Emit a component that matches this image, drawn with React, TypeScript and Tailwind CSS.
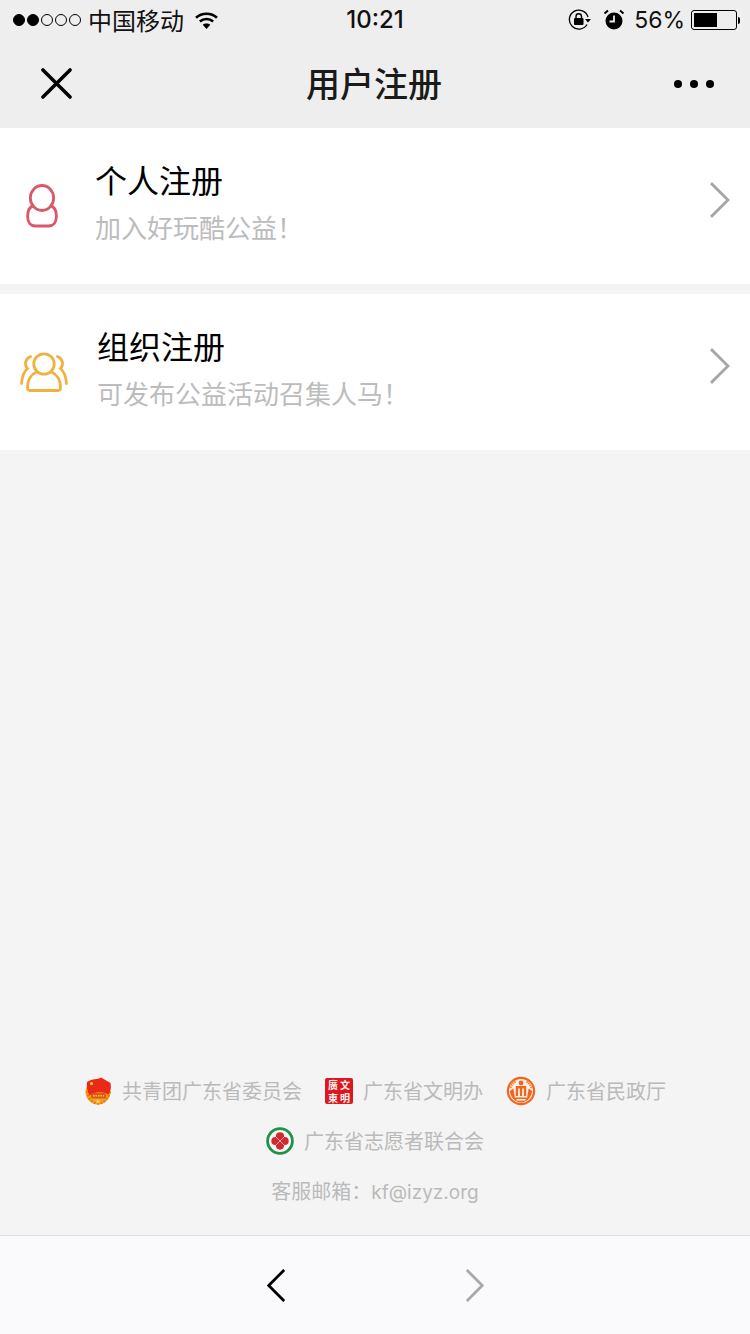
import type { ReactNode } from "react";

const cjk = "font-['Noto_Sans_CJK_SC','Liberation_Sans',sans-serif]";

function SignalDots() {
  return (
    <div className="flex items-center gap-[1.5px]">
      {[0, 1, 2, 3, 4].map((i) => (
        <span
          key={i}
          className={`h-[12.4px] w-[12.4px] rounded-full border border-black ${i < 2 ? "bg-black" : ""}`}
        />
      ))}
    </div>
  );
}

function WifiIcon() {
  return (
    <svg width="25" height="19" viewBox="0 0 26 20" fill="none" stroke="#000" strokeWidth="2.8">
      <path d="M2 7 C8 1.5 18 1.5 24 7" />
      <path d="M6 11 C10 7.5 16 7.5 20 11" />
      <path d="M13 19 L9 14.5 C11 12.8 15 12.8 17 14.5 Z" fill="#000" stroke="none" />
    </svg>
  );
}

function RotationLockIcon() {
  return (
    <svg width="24" height="22" viewBox="0 0 24 22" fill="none">
      <path d="M20 8 A9.5 9.5 0 1 0 19 15.5" stroke="#000" strokeWidth="1.3" />
      <path d="M17 10 H23 L20 13.5 Z" fill="#000" />
      <rect x="6" y="9" width="9.5" height="7" rx="1" fill="#000" />
      <path d="M8 9 V7.5 A2.7 2.7 0 0 1 13.5 7.5 V9" stroke="#000" strokeWidth="1.4" />
    </svg>
  );
}

function AlarmIcon() {
  return (
    <svg width="22" height="22" viewBox="0 0 22 22" fill="none">
      <circle cx="11" cy="12" r="8.5" fill="#000" />
      <path d="M11 6.5 V12.5 H6.5" stroke="#eeeeee" strokeWidth="1.8" />
      <path d="M1.5 4.5 L5 1.5 M20.5 4.5 L17 1.5" stroke="#000" strokeWidth="2" />
    </svg>
  );
}

function Battery() {
  return (
    <div className="flex items-center">
      <div className="h-[20px] w-[46px] rounded-[3px] border border-black p-[2px]">
        <div className="h-full w-[23px] bg-black" />
      </div>
      <div className="ml-[1px] h-[7px] w-[2px] rounded-r-sm bg-black" />
    </div>
  );
}

function Chevron({ dir, color, width = 2.8, w, h }: { dir: "left" | "right"; color: string; width?: number; w: number; h: number }) {
  return (
    <svg width={w} height={h} viewBox="0 0 21 34" preserveAspectRatio="none" fill="none" stroke={color} strokeWidth={width}>
      <path d={dir === "right" ? "M2 1 L19 17 L2 33" : "M19 1 L2 17 L19 33"} />
    </svg>
  );
}

function PersonIcon() {
  return (
    <svg width="32" height="44" viewBox="0 0 34 44" preserveAspectRatio="none" fill="none" stroke="#d9596a" strokeWidth="3">
      <circle cx="17" cy="14" r="12.4" />
      <path d="M8 21.5 C4 23 1.8 26 1.8 31 V33 C1.8 38.5 5 42 10 42 H24 C29 42 32.2 38.5 32.2 33 V31 C32.2 26 30 23 26 21.5" />
    </svg>
  );
}

function GroupIcon() {
  return (
    <svg width="48" height="40" viewBox="0 0 48 40" fill="none" stroke="#f2b040" strokeWidth="2.8" strokeLinecap="round">
      <circle cx="24" cy="12" r="10.2" />
      <path d="M16.5 20 C10 23 7.5 29 7.5 35.5 C7.5 38 8 38.5 10 38.5 H38 C40 38.5 40.5 38 40.5 35.5 C40.5 29 38 23 31.5 20" />
      <path d="M10.5 4.5 C5 7 4 13 7.5 16.5 C4 19.5 2 25 1.5 31.5" />
      <path d="M37.5 4.5 C43 7 44 13 40.5 16.5 C44 19.5 46 25 46.5 31.5" />
    </svg>
  );
}

function YouthLeagueBadge() {
  return (
    <svg width="28" height="28" viewBox="0 0 28 28">
      <circle cx="14" cy="15" r="12.5" fill="#f3a51f" />
      <path d="M3.5 14 C3 20 8 26.5 14 26.5 C20 26.5 25 20 26 14" fill="none" stroke="#e77c17" strokeWidth="2.4" strokeDasharray="2 1.4" />
      <path d="M3 5 C9 1 13 3 17 0.5 L26.5 6 C27.5 11 26.5 14 24.5 17.5 C18 14 10 15 5.5 18.5 C3 14 2.5 9 3 5 Z" fill="#ea2a17" />
      <circle cx="7.5" cy="6.5" r="1.5" fill="#f8d23c" />
      <rect x="7" y="16" width="15" height="5.5" rx="1.5" fill="#e2561a" />
      <path d="M9 18.7 H20" stroke="#f8c740" strokeWidth="1.4" strokeDasharray="1.5 1" />
      <circle cx="14" cy="24.5" r="1.8" fill="#fad04e" />
    </svg>
  );
}

// red square seal holding the four characters
function CivilisationSeal() {
  return (
    <div className="grid h-[26px] w-[28px] grid-cols-2 place-items-center rounded-[2px] bg-[#dc1720] px-[2px] font-['Noto_Sans_CJK_SC',serif] text-[10px] font-bold leading-[11px] text-[#fff2ee]">
      <span>廣</span>
      <span>文</span>
      <span>東</span>
      <span>明</span>
    </div>
  );
}

function CivilAffairsBadge() {
  return (
    <svg width="30" height="30" viewBox="0 0 30 30">
      <circle cx="15" cy="15" r="14.2" fill="#f0651f" />
      <circle cx="15" cy="15" r="12" fill="#fff0e2" />
      <path d="M4.5 12 A10.8 10.8 0 0 1 10 5.2 M25.5 12 A10.8 10.8 0 0 0 20 5.2" fill="none" stroke="#f0873f" strokeWidth="2.2" strokeDasharray="1.5 0.8" />
      <path d="M3.8 15 C4.5 21 9 26.5 15 26.5 C21 26.5 25.5 21 26.2 15 L22.6 12.5 L21.2 21.5 H8.8 L7.4 12.5 Z" fill="#f0651f" />
      <circle cx="15" cy="7" r="2.4" fill="#f0651f" />
      <path d="M9.8 10 H20.2 V20 H17.9 V12.6 H16.1 V20 H13.9 V12.6 H12.1 V20 H9.8 Z" fill="#f0651f" />
      <rect x="10.5" y="23" width="9" height="1.6" fill="#fff0e2" />
    </svg>
  );
}

function VolunteerBadge() {
  return (
    <svg width="28" height="28" viewBox="0 0 28 28">
      <circle cx="14" cy="14" r="12.4" fill="#f7f8f4" stroke="#1f9149" strokeWidth="2.8" />
      <circle cx="14" cy="9.4" r="4.1" fill="#d2282f" />
      <circle cx="14" cy="18.6" r="4.1" fill="#d2282f" />
      <circle cx="9.4" cy="14" r="4.1" fill="#d2282f" />
      <circle cx="18.6" cy="14" r="4.1" fill="#d2282f" />
      <path d="M9.5 9.5 L18.5 18.5 M18.5 9.5 L9.5 18.5" stroke="#f3b7b3" strokeWidth="0.9" />
    </svg>
  );
}

function RegisterRow({ icon, title, hint, iconBox }: { icon: ReactNode; title: string; hint: string; iconBox: string }) {
  return (
    <div className="flex h-[156px] items-center bg-white pr-[20px]">
      <div className={`flex shrink-0 justify-center ${iconBox}`}>{icon}</div>
      <div className="mt-[-10px] flex-1">
        <div className="text-[32px] leading-[46px] text-black">{title}</div>
        <div className="mt-[6px] text-[26px] leading-[38px] text-[#bcbcbc]">{hint}</div>
      </div>
      <div className="mt-[-12px]">
        <Chevron dir="right" color="#a6a6a6" w={21} h={36} />
      </div>
    </div>
  );
}

function Partner({ badge, name }: { badge: ReactNode; name: string }) {
  return (
    <div className="flex items-center gap-[10px]">
      {badge}
      <span className="text-[20px] leading-[28px] text-[#bababa]">{name}</span>
    </div>
  );
}

export default function App() {
  return (
    <div className={`flex h-[1334px] w-[750px] flex-col overflow-hidden bg-[#f4f4f4] ${cjk}`}>
      {/* status bar + title bar */}
      <header className="h-[128px] shrink-0 bg-[#eeeeee]">
        <div className="relative flex h-[40px] items-center justify-between pl-[13px] pr-[10px]">
          <div className="flex items-center">
            <SignalDots />
            <span className="ml-[7px] text-[24px] leading-[40px] text-[#111]">中国移动</span>
            <span className="ml-[10px]"><WifiIcon /></span>
          </div>
          <span className="absolute left-1/2 top-0 -translate-x-1/2 font-['Inter',sans-serif] text-[24px] font-medium leading-[40px] text-[#111]">
            10:21
          </span>
          <div className="flex items-center">
            <RotationLockIcon />
            <span className="ml-[11px]"><AlarmIcon /></span>
            <span className="ml-[9px] font-['Inter',sans-serif] text-[23px] leading-[40px] text-[#111]">56%</span>
            <span className="ml-[6px]"><Battery /></span>
          </div>
        </div>
        <div className="flex h-[88px] items-center justify-between pb-[1px] pl-[41px] pr-[36px]">
          <svg width="31" height="31" viewBox="0 0 32 32" stroke="#000" strokeWidth="3.6" strokeLinecap="round">
            <path d="M2 2 L30 30 M30 2 L2 30" />
          </svg>
          <h1 className="mb-[2px] ml-[2px] text-[34px] font-medium leading-[44px] text-[#1a1a1a]">用户注册</h1>
          <div className="flex items-center gap-[8px]">
            <span className="h-[8px] w-[8px] rounded-full bg-black" />
            <span className="h-[8px] w-[8px] rounded-full bg-black" />
            <span className="h-[8px] w-[8px] rounded-full bg-black" />
          </div>
        </div>
      </header>

      <main className="flex flex-1 flex-col">
        <RegisterRow icon={<PersonIcon />} title="个人注册" hint="加入好玩酷公益！" iconBox="w-[95px] pr-[11px]" />
        <div className="h-[10px]" />
        <RegisterRow icon={<GroupIcon />} title="组织注册" hint="可发布公益活动召集人马！" iconBox="w-[97px] pr-[10px]" />

        {/* partner organisations + contact */}
        <div className="mt-auto flex flex-col items-center pb-[28px]">
          <div className="flex items-center gap-[23px]">
            <Partner badge={<YouthLeagueBadge />} name="共青团广东省委员会" />
            <Partner badge={<CivilisationSeal />} name="广东省文明办" />
            <Partner badge={<CivilAffairsBadge />} name="广东省民政厅" />
          </div>
          <div className="mt-[21px]">
            <Partner badge={<VolunteerBadge />} name="广东省志愿者联合会" />
          </div>
          <div className="mt-[22px] text-[20px] leading-[28px] text-[#bababa]">
            客服邮箱：<span className="font-['Inter',sans-serif] text-[19px]">kf@izyz.org</span>
          </div>
        </div>
      </main>

      {/* browser back/forward bar */}
      <footer className="flex h-[99px] shrink-0 items-center justify-center gap-[179px] border-t border-[#dcdcdc] bg-[#fafafc]">
        <Chevron dir="left" color="#000" w={19} h={33} width={3} />
        <Chevron dir="right" color="#a9a9a9" w={19} h={33} width={3} />
      </footer>
    </div>
  );
}
